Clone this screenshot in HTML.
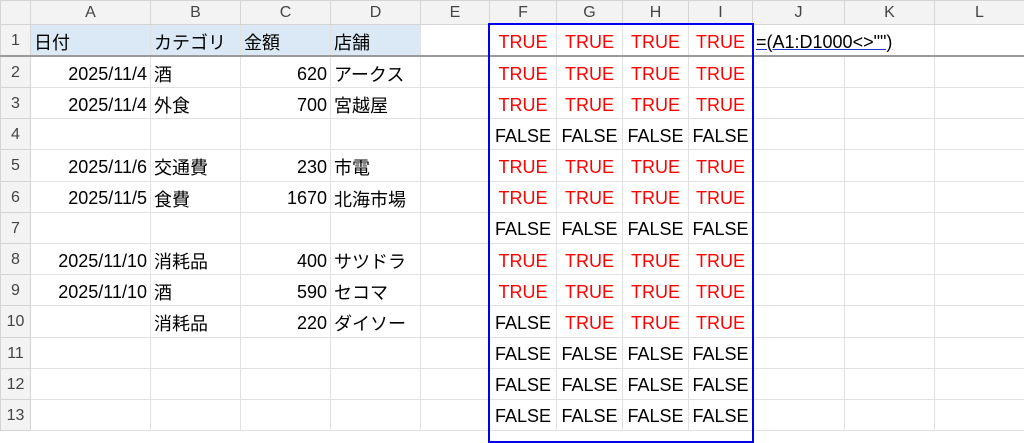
<!DOCTYPE html><html><head><meta charset="utf-8"><style>
body{margin:0;width:1024px;height:420px;overflow:hidden;background:#fff;font-family:"Liberation Sans","Noto Sans CJK JP",sans-serif;}
table{border-collapse:collapse;table-layout:fixed;position:absolute;left:0;top:0;width:1024px}
td{border:1px solid #e1e1e1;padding:4px 3px 0 3px;font-size:18px;white-space:nowrap;overflow:visible;color:#000;box-sizing:border-box}
tr{height:31.2px}
tr.h{height:24px}
tr.h td{background:#f3f3f3;color:#444;text-align:center;font-size:16px;border-color:#d4d4d4;padding:0}
td.rh{background:#f3f3f3;color:#444;text-align:center;font-size:16px;border-color:#d4d4d4;padding:2px 0 0 0}
.r{text-align:right}.t{color:#f00;text-align:center}.f{text-align:center}
.b{background:#dbe9f6}
tr.r1 td{border-bottom:2px solid #9a9a9a}
</style></head><body>
<table>
<colgroup><col style="width:30px"><col style="width:120px"><col style="width:90px"><col style="width:90px"><col style="width:90px"><col style="width:69px"><col style="width:67px"><col style="width:66px"><col style="width:66px"><col style="width:64px"><col style="width:92px"><col style="width:90px"><col style="width:90px"></colgroup>
<tr class="h"><td></td><td>A</td><td>B</td><td>C</td><td>D</td><td>E</td><td>F</td><td>G</td><td>H</td><td>I</td><td>J</td><td>K</td><td>L</td></tr>
<tr class="r1"><td class="rh">1</td><td class="b">日付</td><td class="b">カテゴリ</td><td class="b">金額</td><td class="b">店舗</td><td></td><td class="t">TRUE</td><td class="t">TRUE</td><td class="t">TRUE</td><td class="t">TRUE</td><td style="border-right:none"><span style="text-decoration:underline;text-decoration-color:#2233cc">=(A1:D1000&lt;&gt;"")</span></td><td style="border-left:none"></td><td></td></tr>
<tr><td class="rh">2</td><td class="r">2025/11/4</td><td>酒</td><td class="r">620</td><td>アークス</td><td></td><td class="t">TRUE</td><td class="t">TRUE</td><td class="t">TRUE</td><td class="t">TRUE</td><td></td><td></td><td></td></tr>
<tr><td class="rh">3</td><td class="r">2025/11/4</td><td>外食</td><td class="r">700</td><td>宮越屋</td><td></td><td class="t">TRUE</td><td class="t">TRUE</td><td class="t">TRUE</td><td class="t">TRUE</td><td></td><td></td><td></td></tr>
<tr><td class="rh">4</td><td></td><td></td><td></td><td></td><td></td><td class="f">FALSE</td><td class="f">FALSE</td><td class="f">FALSE</td><td class="f">FALSE</td><td></td><td></td><td></td></tr>
<tr><td class="rh">5</td><td class="r">2025/11/6</td><td>交通費</td><td class="r">230</td><td>市電</td><td></td><td class="t">TRUE</td><td class="t">TRUE</td><td class="t">TRUE</td><td class="t">TRUE</td><td></td><td></td><td></td></tr>
<tr><td class="rh">6</td><td class="r">2025/11/5</td><td>食費</td><td class="r">1670</td><td>北海市場</td><td></td><td class="t">TRUE</td><td class="t">TRUE</td><td class="t">TRUE</td><td class="t">TRUE</td><td></td><td></td><td></td></tr>
<tr><td class="rh">7</td><td></td><td></td><td></td><td></td><td></td><td class="f">FALSE</td><td class="f">FALSE</td><td class="f">FALSE</td><td class="f">FALSE</td><td></td><td></td><td></td></tr>
<tr><td class="rh">8</td><td class="r">2025/11/10</td><td>消耗品</td><td class="r">400</td><td>サツドラ</td><td></td><td class="t">TRUE</td><td class="t">TRUE</td><td class="t">TRUE</td><td class="t">TRUE</td><td></td><td></td><td></td></tr>
<tr><td class="rh">9</td><td class="r">2025/11/10</td><td>酒</td><td class="r">590</td><td>セコマ</td><td></td><td class="t">TRUE</td><td class="t">TRUE</td><td class="t">TRUE</td><td class="t">TRUE</td><td></td><td></td><td></td></tr>
<tr><td class="rh">10</td><td></td><td>消耗品</td><td class="r">220</td><td>ダイソー</td><td></td><td class="f">FALSE</td><td class="t">TRUE</td><td class="t">TRUE</td><td class="t">TRUE</td><td></td><td></td><td></td></tr>
<tr><td class="rh">11</td><td></td><td></td><td></td><td></td><td></td><td class="f">FALSE</td><td class="f">FALSE</td><td class="f">FALSE</td><td class="f">FALSE</td><td></td><td></td><td></td></tr>
<tr><td class="rh">12</td><td></td><td></td><td></td><td></td><td></td><td class="f">FALSE</td><td class="f">FALSE</td><td class="f">FALSE</td><td class="f">FALSE</td><td></td><td></td><td></td></tr>
<tr><td class="rh">13</td><td></td><td></td><td></td><td></td><td></td><td class="f">FALSE</td><td class="f">FALSE</td><td class="f">FALSE</td><td class="f">FALSE</td><td></td><td></td><td></td></tr>
</table>
<div style="position:absolute;left:488px;top:23px;width:266px;height:420px;border:2px solid #0000ee;box-sizing:border-box"></div>
</body></html>
